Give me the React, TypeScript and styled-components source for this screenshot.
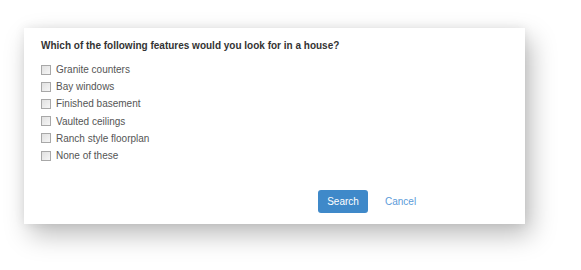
import styled, { createGlobalStyle } from "styled-components";

const GlobalStyle = createGlobalStyle`
    html, body {
        margin: 0;
        padding: 0;
        background: #ffffff;
    }
`;

const Page = styled.div`
    width: 581px;
    height: 270px;
    padding: 28px 0 0 24px;
    box-sizing: border-box;
    font-family: "Liberation Sans", Arial, sans-serif;
`;

const Card = styled.div`
    width: 501px;
    height: 196px;
    box-sizing: border-box;
    background: #ffffff;
    padding: 11px 17px 0 17px;
    display: flex;
    flex-direction: column;
    box-shadow: 6px 11px 24px rgba(0, 0, 0, 0.26), 0 0 10px rgba(0, 0, 0, 0.08);
`;

const Question = styled.div`
    font-size: 10px;
    font-weight: bold;
    color: #333333;
    line-height: 14px;
    margin-bottom: 10px;
`;

const OptionList = styled.div`
    display: flex;
    flex-direction: column;
    gap: 4px;
`;

const Option = styled.label`
    display: flex;
    align-items: center;
    gap: 5px;
    height: 13.2px;
    font-size: 10px;
    color: #555555;
`;

const Box = styled.span`
    width: 8px;
    height: 8px;
    border: 1px solid #a8a8a8;
    background: linear-gradient(135deg, #e0e0e0, #f6f6f6);
    flex-shrink: 0;
`;

const Footer = styled.div`
    display: flex;
    align-items: center;
    justify-content: flex-start;
    gap: 17px;
    margin-top: 28px;
    padding-left: 277px;
`;

const PrimaryBtn = styled.button`
    width: 50px;
    height: 23px;
    border: none;
    border-radius: 3px;
    background: #3f89c9;
    color: #ffffff;
    font-family: inherit;
    font-size: 10px;
    padding: 0;
`;

const LinkBtn = styled.span`
    font-size: 10px;
    color: #5b9bd9;
`;

const options = [
    "Granite counters",
    "Bay windows",
    "Finished basement",
    "Vaulted ceilings",
    "Ranch style floorplan",
    "None of these",
];

export default function App() {
    return (
        <Page>
            <GlobalStyle />
            <Card>
                <Question>Which of the following features would you look for in a house?</Question>
                <OptionList>
                    {options.map((o) => (
                        <Option key={o}>
                            <Box />
                            {o}
                        </Option>
                    ))}
                </OptionList>
                <Footer>
                    <PrimaryBtn>Search</PrimaryBtn>
                    <LinkBtn>Cancel</LinkBtn>
                </Footer>
            </Card>
        </Page>
    );
}
